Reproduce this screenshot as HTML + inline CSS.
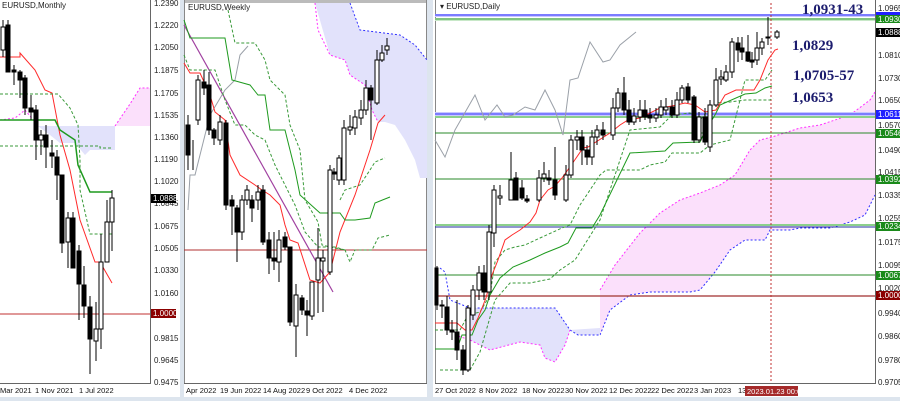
<!DOCTYPE html>
<html><head><meta charset="utf-8"><style>
html,body{margin:0;padding:0;background:#fff;}
svg{display:block;font-family:"Liberation Sans",sans-serif;}
.ax{font-size:8px;fill:#222;}
.dt{font-size:7.5px;fill:#111;}
.ann{font-family:"Liberation Serif",serif;font-weight:bold;font-size:15px;fill:#1c1c6e;}
.c line{stroke:#000;stroke-width:1}
.c .w{fill:#fff;stroke:#000;stroke-width:1}
.c .b{fill:#000;stroke:#000;stroke-width:1}
.r{fill:none;stroke:#ff2a2a;stroke-width:1}
.g{fill:none;stroke:#1e9a1e;stroke-width:1}
.gd{fill:none;stroke:#3a9a3a;stroke-width:1;stroke-dasharray:3,2}
.gr{fill:none;stroke:#9aa0a8;stroke-width:1}
.pm{fill:#fbe0fb;}
.pb{fill:#e2e2fb;}
</style></head><body>
<svg width="900" height="401" viewBox="0 0 900 401" xmlns="http://www.w3.org/2000/svg">
<rect width="900" height="401" fill="#fff"/>
<rect x="150" y="0" width="1" height="384" fill="#666"/>
<rect x="180" y="0" width="4" height="401" fill="#dde5ee"/>
<rect x="184" y="0" width="243" height="3" fill="#bbb"/>
<rect x="184" y="0" width="1" height="384" fill="#888"/>
<rect x="426" y="0" width="1" height="384" fill="#888"/>
<rect x="427" y="0" width="6" height="401" fill="#dde5ee"/>
<rect x="435" y="0" width="1" height="384" fill="#888"/>
<rect x="875" y="0" width="1" height="384" fill="#666"/>
<rect x="0" y="383" width="151" height="1" fill="#666"/>
<rect x="184" y="383" width="243" height="1" fill="#666"/>
<rect x="435" y="383" width="441" height="1" fill="#666"/>
<rect x="0" y="397" width="900" height="4" fill="#dde5ee"/>

<!-- ========== MONTHLY ========== -->
<text x="2" y="8" class="ax">EURUSD,Monthly</text>
<polygon class="pb" points="35,126 115,126 115,150 90,150 85,155 75,143 60,143 50,135 35,124"/>
<polygon class="pm" points="115,126 130,104 140,88 150,88 150,126"/>
<polyline points="115,126 130,104 140,88 150,88" fill="none" stroke="#ff30ff" stroke-dasharray="2,2"/>
<polyline points="0,120 15,118 25,110 35,122" fill="none" stroke="#ff30ff" stroke-dasharray="2,2"/>
<line x1="0" y1="314" x2="150" y2="314" stroke="#c03030"/>
<polyline class="r" points="0,57 20,57 20,53 35,70 45,90 52,93 60,135 70,170 75,195 80,220 95,262 100,262 112,283"/>
<polyline class="g" points="0,120 55,120 60,130 75,140 78,165 90,192 112,192" style="stroke-width:1.5"/>
<polyline class="gd" points="0,94 58,94 70,108 78,125 80,160 80,190 90,234 112,234"/>
<polyline class="gd" points="0,146 100,146 100,148 112,148"/>
<g class="c">
<line x1="3" y1="20" x2="3" y2="57"/><rect class="w" x="1" y="27" width="4" height="23"/>
<line x1="8" y1="20" x2="8" y2="72"/><rect class="b" x="6" y="25" width="4" height="47"/>
<line x1="14" y1="65" x2="14" y2="85"/><rect class="b" x="12" y="70" width="4" height="2"/>
<line x1="20" y1="70" x2="20" y2="98"/><rect class="b" x="18" y="72" width="4" height="8"/>
<line x1="25" y1="75" x2="25" y2="115"/><rect class="b" x="23" y="78" width="4" height="30"/>
<line x1="31" y1="95" x2="31" y2="120"/><rect class="b" x="29" y="108" width="4" height="4"/>
<line x1="36" y1="105" x2="36" y2="160"/><rect class="b" x="34" y="110" width="4" height="30"/>
<line x1="41" y1="130" x2="41" y2="155"/><rect class="w" x="39" y="135" width="4" height="5"/>
<line x1="46" y1="125" x2="46" y2="168"/><rect class="b" x="44" y="135" width="4" height="12"/>
<line x1="52" y1="140" x2="52" y2="168"/><rect class="b" x="50" y="153" width="4" height="3"/>
<line x1="57" y1="150" x2="57" y2="200"/><rect class="b" x="55" y="157" width="4" height="18"/>
<line x1="62" y1="175" x2="62" y2="253"/><rect class="b" x="60" y="175" width="4" height="68"/>
<line x1="68" y1="212" x2="68" y2="268"/><rect class="w" x="66" y="218" width="4" height="24"/>
<line x1="73" y1="212" x2="73" y2="268"/><rect class="b" x="71" y="218" width="4" height="50"/>
<line x1="79" y1="245" x2="79" y2="320"/><rect class="b" x="77" y="251" width="4" height="33"/>
<line x1="84" y1="266" x2="84" y2="318"/><rect class="b" x="82" y="285" width="4" height="21"/>
<line x1="90" y1="296" x2="90" y2="374"/><rect class="b" x="88" y="307" width="4" height="32"/>
<line x1="96" y1="302" x2="96" y2="361"/><rect class="w" x="94" y="329" width="4" height="12"/>
<line x1="101" y1="234" x2="101" y2="349"/><rect class="w" x="99" y="262" width="4" height="67"/>
<line x1="107" y1="200" x2="107" y2="251"/><rect class="w" x="105" y="222" width="4" height="40"/>
<line x1="112" y1="190" x2="112" y2="251"/><rect class="w" x="110" y="198" width="4" height="24"/>
</g>
<g class="ax">
<text x="154" y="6">1.2390</text><text x="154" y="28">1.2220</text><text x="154" y="50">1.2050</text>
<text x="154" y="73">1.1875</text><text x="154" y="96">1.1705</text><text x="154" y="118">1.1535</text>
<text x="154" y="140">1.1360</text><text x="154" y="162">1.1190</text><text x="154" y="184">1.1020</text>
<text x="154" y="206">1.0845</text><text x="154" y="229">1.0675</text><text x="154" y="251">1.0505</text>
<text x="154" y="273">1.0330</text><text x="154" y="296">1.0160</text><text x="154" y="341">0.9815</text>
<text x="154" y="363">0.9645</text><text x="154" y="385">0.9475</text>
</g>
<rect x="151" y="194" width="25" height="9" fill="#000"/><text x="153" y="201" class="ax" style="fill:#fff">1.0888</text>
<rect x="151" y="309" width="25" height="9" fill="#8b0000"/><text x="153" y="316" class="ax" style="fill:#fff">1.0000</text>
<g class="dt"><text x="0" y="393">Mar 2021</text><text x="35" y="393">1 Nov 2021</text><text x="79" y="393">1 Jul 2022</text></g>

<!-- ========== WEEKLY ========== -->
<text x="188" y="10" class="ax">EURUSD,Weekly</text>
<polygon class="pb" points="315,3 350,3 360,30 400,35 415,45 427,60 427,178 420,178 415,160 405,140 395,125 385,122 378,122 372,110 365,85 350,75 345,60 330,55"/>
<polyline points="315,3 318,30 330,55 345,60 350,75 365,85 372,110 378,122" fill="none" stroke="#ff30ff" stroke-dasharray="2,2"/>
<polyline points="350,3 360,30 400,35 415,45 427,60" fill="none" stroke="#3030ff" stroke-dasharray="2,2"/>
<line x1="184" y1="250" x2="427" y2="250" stroke="#b03030"/>
<line x1="184" y1="25" x2="333" y2="292" stroke="#a040a0" stroke-width="1.2"/>
<polyline class="gr" points="188,210 190,175 195,175 210,115 225,90 235,80 240,55 248,46"/>
<polyline class="r" points="184,63 190,73 200,73 210,95 215,112 225,120 230,155 240,175 255,185 262,190 270,195 280,205 285,225 290,240 298,243 310,280 320,283 330,272 340,232 355,195 370,150 378,123 385,115"/>
<polyline class="g" points="184,20 190,38 225,38 232,80 250,85 258,95 265,95 270,130 285,130 295,170 300,195 320,213 340,213 345,220 355,220 370,218 375,203 390,197"/>
<polyline class="gd" points="228,10 235,43 255,43 265,60 270,80 285,95 290,125 300,150 305,200 318,222 322,245 330,247 345,250 350,262 355,250 372,250 378,238 390,235"/>
<polyline class="gd" points="184,55 190,70 215,70 225,100 235,125 245,125 255,135 265,140 275,165 285,185 295,205 305,232 318,247 335,247 345,250"/>
<polyline class="gd" points="340,200 345,190 360,185 370,170 375,162 385,158"/>
<g class="c">
<line x1="188" y1="115" x2="188" y2="170"/><rect class="b" x="186" y="125" width="4" height="30"/>
<line x1="193" y1="140" x2="193" y2="170"/>
<line x1="198" y1="75" x2="198" y2="125"/><rect class="w" x="196" y="80" width="4" height="40"/>
<line x1="204" y1="70" x2="204" y2="95"/><rect class="b" x="202" y="82" width="4" height="6"/>
<line x1="209" y1="72" x2="209" y2="135"/><rect class="b" x="207" y="85" width="4" height="45"/>
<line x1="214" y1="128" x2="214" y2="145"/><rect class="b" x="212" y="130" width="4" height="8"/>
<line x1="220" y1="115" x2="220" y2="145"/><rect class="w" x="218" y="122" width="4" height="18"/>
<line x1="226" y1="120" x2="226" y2="210"/><rect class="b" x="224" y="123" width="4" height="82"/>
<line x1="232" y1="195" x2="232" y2="235"/><rect class="b" x="230" y="200" width="4" height="6"/>
<line x1="237" y1="205" x2="237" y2="262"/><rect class="b" x="235" y="208" width="4" height="24"/>
<line x1="242" y1="195" x2="242" y2="240"/><rect class="w" x="240" y="200" width="4" height="32"/>
<line x1="247" y1="185" x2="247" y2="205"/><rect class="w" x="245" y="190" width="4" height="10"/>
<line x1="252" y1="195" x2="252" y2="222"/><rect class="b" x="250" y="200" width="4" height="8"/>
<line x1="258" y1="185" x2="258" y2="210"/><rect class="w" x="256" y="192" width="4" height="8"/>
<line x1="263" y1="185" x2="263" y2="245"/><rect class="b" x="261" y="190" width="4" height="52"/>
<line x1="269" y1="232" x2="269" y2="274"/><rect class="b" x="267" y="240" width="4" height="18"/>
<line x1="274" y1="232" x2="274" y2="270"/><rect class="b" x="272" y="258" width="4" height="3"/>
<line x1="279" y1="230" x2="279" y2="282"/><rect class="w" x="277" y="240" width="4" height="22"/>
<line x1="285" y1="232" x2="285" y2="250"/><rect class="b" x="283" y="237" width="4" height="10"/>
<line x1="290" y1="247" x2="290" y2="326"/><rect class="b" x="288" y="247" width="4" height="75"/>
<line x1="296" y1="284" x2="296" y2="357"/><rect class="w" x="294" y="295" width="4" height="31"/>
<line x1="302" y1="295" x2="302" y2="315"/><rect class="b" x="300" y="298" width="4" height="12"/>
<line x1="307" y1="300" x2="307" y2="336"/><rect class="b" x="305" y="311" width="4" height="4"/>
<line x1="312" y1="282" x2="312" y2="320"/><rect class="w" x="310" y="282" width="4" height="34"/>
<line x1="318" y1="228" x2="318" y2="313"/><rect class="w" x="316" y="258" width="4" height="22"/>
<line x1="323" y1="250" x2="323" y2="312"/><rect class="w" x="321" y="258" width="4" height="3"/>
<line x1="330" y1="165" x2="330" y2="275"/><rect class="w" x="328" y="170" width="4" height="102"/>
<line x1="334" y1="168" x2="334" y2="180"/><rect class="b" x="332" y="172" width="4" height="2"/>
<line x1="339" y1="155" x2="339" y2="185"/><rect class="w" x="337" y="158" width="4" height="22"/>
<line x1="344" y1="120" x2="344" y2="185"/><rect class="w" x="342" y="128" width="4" height="52"/>
<line x1="350" y1="115" x2="350" y2="135"/><rect class="w" x="348" y="127" width="4" height="3"/>
<line x1="355" y1="110" x2="355" y2="135"/><rect class="w" x="353" y="117" width="4" height="11"/>
<line x1="361" y1="100" x2="361" y2="125"/><rect class="w" x="359" y="110" width="4" height="8"/>
<line x1="366" y1="80" x2="366" y2="115"/><rect class="w" x="364" y="88" width="4" height="22"/>
<line x1="371" y1="85" x2="371" y2="140"/><rect class="b" x="369" y="88" width="4" height="12"/>
<line x1="377" y1="50" x2="377" y2="105"/><rect class="w" x="375" y="60" width="4" height="43"/>
<line x1="382" y1="45" x2="382" y2="62"/><rect class="w" x="380" y="53" width="4" height="7"/>
<line x1="387" y1="38" x2="387" y2="55"/><rect class="w" x="385" y="46" width="4" height="4"/>
</g>
<g class="dt"><text x="186" y="393">Apr 2022</text><text x="220" y="393">19 Jun 2022</text><text x="263" y="393">14 Aug 2022</text><text x="306" y="393">9 Oct 2022</text><text x="349" y="393">4 Dec 2022</text></g>

<!-- ========== DAILY ========== -->
<text x="440" y="9" class="ax">▾ EURUSD,Daily</text>
<polygon class="pm" points="600,290 615,265 640,233 660,213 680,200 700,193 720,185 735,175 750,150 760,140 772,137 800,128 820,125 850,115 870,100 875,92 875,195 865,215 850,222 830,228 800,228 790,230 770,230 765,240 745,240 730,250 715,272 700,290 690,292 650,292 630,295 610,310 600,335"/>
<polyline points="600,290 615,265 640,233 660,213 680,200 700,193 720,185 735,175 750,150 760,140 772,137 800,128 820,125 850,115 870,100 875,92" fill="none" stroke="#ff30ff" stroke-dasharray="2,2"/>
<polyline points="600,335 610,310 630,295 650,292 690,292 700,290 715,272 730,250 745,240 765,240 770,230 790,230 800,228 830,228 850,222 865,215 875,195" fill="none" stroke="#3030ff" stroke-dasharray="2,2"/>
<polygon class="pb" points="470,308 555,308 570,330 578,335 600,335 600,328 570,330 565,345 555,362 545,358 540,345 520,342 490,350 470,340"/>
<polyline points="440,268 445,272 450,300 470,308 555,308 570,330 578,335 600,335" fill="none" stroke="#3030ff" stroke-dasharray="2,2"/>
<polyline points="455,335 470,340 490,350 520,342 540,345 545,358 555,362 565,345 570,330" fill="none" stroke="#ff30ff" stroke-dasharray="2,2"/>
<rect x="435" y="14" width="440" height="3" fill="#c8c8ff"/><line x1="435" y1="15" x2="875" y2="15" stroke="#3030ff"/>
<rect x="435" y="18" width="440" height="3" fill="#c8e8c8"/><line x1="435" y1="19" x2="875" y2="19" stroke="#3aa03a"/>
<rect x="435" y="112" width="440" height="5" fill="#c8c8ff"/><line x1="435" y1="114" x2="875" y2="114" stroke="#3030ff"/>
<line x1="435" y1="117" x2="875" y2="117" stroke="#8cd08c" stroke-width="2"/>
<line x1="435" y1="133" x2="875" y2="133" stroke="#2a8a2a"/>
<line x1="435" y1="179" x2="875" y2="179" stroke="#2a8a2a"/>
<line x1="435" y1="225" x2="875" y2="225" stroke="#8cd08c" stroke-width="2"/><line x1="435" y1="227" x2="875" y2="227" stroke="#2030a0"/>
<line x1="435" y1="275" x2="875" y2="275" stroke="#2a8a2a"/>
<line x1="435" y1="296" x2="875" y2="296" stroke="#b05050" stroke-width="1.5"/>
<line x1="771" y1="3" x2="771" y2="383" stroke="#c03030" stroke-dasharray="2,2"/>
<polyline class="gr" points="435,140 445,157 455,130 475,95 485,120 497,105 505,117 513,115 525,107 535,110 545,90 555,110 563,135 570,80 578,78 590,42 603,62 610,60 620,45 636,32"/>
<polyline class="gd" points="435,330 460,330 468,315 480,312 490,295 495,262 505,250 515,247 525,245 540,238 562,228 570,225 580,205 600,175 606,170 640,170 650,165 665,162 672,153 700,153 710,145 730,140 745,80 765,80 772,70"/>
<polyline class="gd" points="440,370 470,370 480,352 495,300 510,283 530,283 550,279 560,270 575,260 600,220 610,190 630,130 660,127 672,115 690,113 700,120 715,103 730,102 745,100 770,100 773,98"/>
<polyline class="g" points="435,349 457,349 462,335 472,335 478,320 485,310 490,295 500,278 513,267 530,260 545,253 560,247 568,243 576,228 592,228 600,215 630,153 665,151 673,143 700,142 705,131 715,115 720,105 745,94 756,93 765,88 772,86"/>
<polyline class="r" points="435,323 457,323 465,330 472,330 478,318 486,298 492,275 498,260 505,240 512,235 520,230 530,222 536,213 540,200 548,190 555,186 562,178 572,164 583,148 588,147 610,133 620,125 628,120 640,118 660,108 672,106 685,103 695,105 705,112 716,110 725,95 736,90 754,90 760,80 768,60 775,50 778,49"/>
<g class="c">
<line x1="437" y1="266" x2="437" y2="310"/><rect class="b" x="435" y="268" width="3" height="37"/>
<line x1="442" y1="300" x2="442" y2="318"/><rect class="b" x="440" y="305" width="4" height="1"/>
<line x1="447" y1="296" x2="447" y2="335"/><rect class="b" x="445" y="307" width="4" height="23"/>
<line x1="452" y1="320" x2="452" y2="340"/><rect class="b" x="450" y="330" width="4" height="2"/>
<line x1="457" y1="300" x2="457" y2="360"/><rect class="b" x="455" y="332" width="4" height="18"/>
<line x1="463" y1="345" x2="463" y2="375"/><rect class="b" x="461" y="350" width="4" height="20"/>
<line x1="468" y1="305" x2="468" y2="372"/><rect class="w" x="466" y="308" width="4" height="62"/>
<line x1="473" y1="285" x2="473" y2="320"/><rect class="w" x="471" y="290" width="4" height="25"/>
<line x1="479" y1="266" x2="479" y2="300"/><rect class="w" x="477" y="273" width="4" height="17"/>
<line x1="484" y1="265" x2="484" y2="300"/><rect class="b" x="482" y="273" width="4" height="19"/>
<line x1="489" y1="225" x2="489" y2="300"/><rect class="w" x="487" y="232" width="4" height="60"/>
<line x1="494" y1="185" x2="494" y2="247"/><rect class="w" x="492" y="190" width="4" height="43"/>
<line x1="500" y1="185" x2="500" y2="205"/><rect class="w" x="498" y="196" width="4" height="2"/>
<line x1="511" y1="152" x2="511" y2="200"/><rect class="w" x="509" y="180" width="4" height="20"/>
<line x1="516" y1="172" x2="516" y2="200"/><rect class="b" x="514" y="178" width="4" height="22"/>
<line x1="522" y1="180" x2="522" y2="200"/><rect class="b" x="520" y="188" width="4" height="10"/>
<line x1="527" y1="195" x2="527" y2="203"/><rect class="b" x="525" y="199" width="4" height="2"/>
<line x1="539" y1="170" x2="539" y2="202"/><rect class="w" x="537" y="178" width="4" height="22"/>
<line x1="544" y1="162" x2="544" y2="182"/><rect class="w" x="542" y="174" width="4" height="4"/>
<line x1="549" y1="170" x2="549" y2="185"/><rect class="b" x="547" y="178" width="4" height="2"/>
<line x1="555" y1="147" x2="555" y2="200"/><rect class="b" x="553" y="180" width="4" height="15"/>
<line x1="566" y1="165" x2="566" y2="202"/><rect class="w" x="564" y="175" width="4" height="25"/>
<line x1="571" y1="135" x2="571" y2="178"/><rect class="w" x="569" y="140" width="4" height="35"/>
<line x1="577" y1="130" x2="577" y2="150"/><rect class="w" x="575" y="137" width="4" height="3"/>
<line x1="582" y1="130" x2="582" y2="165"/><rect class="b" x="580" y="137" width="4" height="13"/>
<line x1="587" y1="145" x2="587" y2="165"/><rect class="b" x="585" y="150" width="4" height="7"/>
<line x1="592" y1="130" x2="592" y2="165"/><rect class="w" x="590" y="137" width="4" height="20"/>
<line x1="597" y1="125" x2="597" y2="145"/><rect class="w" x="595" y="130" width="4" height="7"/>
<line x1="603" y1="122" x2="603" y2="140"/><rect class="b" x="601" y="130" width="4" height="5"/>
<line x1="613" y1="98" x2="613" y2="140"/><rect class="w" x="611" y="108" width="4" height="27"/>
<line x1="618" y1="88" x2="618" y2="112"/><rect class="w" x="616" y="93" width="4" height="15"/>
<line x1="624" y1="77" x2="624" y2="115"/><rect class="b" x="622" y="93" width="4" height="17"/>
<line x1="629" y1="100" x2="629" y2="125"/><rect class="b" x="627" y="110" width="4" height="12"/>
<line x1="634" y1="108" x2="634" y2="125"/><rect class="w" x="632" y="116" width="4" height="6"/>
<line x1="640" y1="100" x2="640" y2="122"/><rect class="w" x="638" y="110" width="4" height="7"/>
<line x1="645" y1="100" x2="645" y2="120"/><rect class="b" x="643" y="110" width="4" height="7"/>
<line x1="650" y1="108" x2="650" y2="123"/><rect class="b" x="648" y="115" width="4" height="3"/>
<line x1="656" y1="108" x2="656" y2="122"/><rect class="w" x="654" y="115" width="4" height="3"/>
<line x1="661" y1="100" x2="661" y2="118"/><rect class="w" x="659" y="107" width="4" height="8"/>
<line x1="666" y1="98" x2="666" y2="115"/><rect class="w" x="664" y="107" width="4" height="3"/>
<line x1="672" y1="100" x2="672" y2="118"/><rect class="b" x="670" y="107" width="4" height="8"/>
<line x1="677" y1="92" x2="677" y2="118"/><rect class="w" x="675" y="100" width="4" height="15"/>
<line x1="682" y1="85" x2="682" y2="103"/><rect class="w" x="680" y="88" width="4" height="12"/>
<line x1="688" y1="83" x2="688" y2="103"/><rect class="b" x="686" y="87" width="4" height="13"/>
<line x1="694" y1="95" x2="694" y2="143"/><rect class="b" x="692" y="97" width="4" height="43"/>
<line x1="699" y1="112" x2="699" y2="143"/><rect class="w" x="697" y="117" width="4" height="23"/>
<line x1="705" y1="108" x2="705" y2="145"/><rect class="b" x="703" y="117" width="4" height="25"/>
<line x1="710" y1="100" x2="710" y2="152"/><rect class="w" x="708" y="105" width="4" height="42"/>
<line x1="716" y1="68" x2="716" y2="107"/><rect class="w" x="714" y="80" width="4" height="25"/>
<line x1="721" y1="70" x2="721" y2="85"/><rect class="w" x="719" y="77" width="4" height="2"/>
<line x1="726" y1="65" x2="726" y2="82"/><rect class="w" x="724" y="72" width="4" height="8"/>
<line x1="732" y1="38" x2="732" y2="78"/><rect class="w" x="730" y="42" width="4" height="30"/>
<line x1="738" y1="37" x2="738" y2="62"/><rect class="b" x="736" y="43" width="4" height="7"/>
<line x1="742" y1="37" x2="742" y2="60"/><rect class="b" x="740" y="48" width="4" height="4"/>
<line x1="748" y1="35" x2="748" y2="62"/><rect class="b" x="746" y="52" width="4" height="9"/>
<line x1="752" y1="52" x2="752" y2="68"/><rect class="b" x="750" y="60" width="4" height="2"/>
<line x1="757" y1="32" x2="757" y2="65"/><rect class="w" x="755" y="48" width="4" height="12"/>
<line x1="762" y1="38" x2="762" y2="55"/><rect class="w" x="760" y="42" width="4" height="6"/>
<line x1="768" y1="17" x2="768" y2="45"/><rect class="b" x="766" y="37" width="4" height="1"/>
<line x1="777" y1="30" x2="777" y2="39"/><rect class="w" x="775" y="32" width="4" height="5"/>
</g>
<text x="802" y="14" class="ann">1,0931-43</text>
<text x="792" y="50" class="ann">1,0829</text>
<text x="793" y="80" class="ann">1,0705-57</text>
<text x="792" y="102" class="ann">1,0653</text>
<g class="ax">
<text x="878" y="11">1.0965</text><text x="878" y="58">1.0810</text><text x="878" y="81">1.0730</text>
<text x="878" y="103">1.0650</text><text x="878" y="128">1.0570</text><text x="878" y="153">1.0490</text>
<text x="878" y="175">1.0415</text><text x="878" y="198">1.0335</text><text x="878" y="221">1.0255</text>
<text x="878" y="245">1.0175</text><text x="878" y="268">1.0095</text><text x="878" y="291">1.0020</text>
<text x="878" y="316">0.9940</text><text x="878" y="339">0.9860</text><text x="878" y="363">0.9780</text>
<text x="878" y="385">0.9705</text>
</g>
<g style="font-size:8px">
<rect x="876" y="12" width="24" height="6" fill="#2020ff"/>
<rect x="876" y="15" width="24" height="8" fill="#1a8a1a"/><text x="878" y="22" style="fill:#fff">1.0930</text>
<rect x="876" y="28" width="24" height="9" fill="#000"/><text x="878" y="35" style="fill:#fff">1.0888</text>
<rect x="876" y="110" width="24" height="9" fill="#2020ff"/><text x="878" y="117" style="fill:#fff">1.0611</text>
<rect x="876" y="129" width="24" height="9" fill="#1a8a1a"/><text x="878" y="136" style="fill:#fff">1.0546</text>
<rect x="876" y="175" width="24" height="9" fill="#1a8a1a"/><text x="878" y="182" style="fill:#fff">1.0392</text>
<rect x="876" y="222" width="24" height="9" fill="#1a8a1a"/><text x="878" y="229" style="fill:#fff">1.0234</text>
<rect x="876" y="271" width="24" height="9" fill="#1a8a1a"/><text x="878" y="278" style="fill:#fff">1.0067</text>
<rect x="876" y="291" width="24" height="9" fill="#8b0000"/><text x="878" y="298" style="fill:#fff">1.0000</text>
</g>
<g class="dt"><text x="435" y="393">27 Oct 2022</text><text x="479" y="393">8 Nov 2022</text><text x="522" y="393">18 Nov 2022</text><text x="565" y="393">30 Nov 2022</text><text x="609" y="393">12 Dec 2022</text><text x="651" y="393">22 Dec 2022</text><text x="694" y="393">3 Jan 2023</text><text x="738" y="393">13</text></g>
<rect x="745" y="386" width="53" height="10" fill="#a52a2a"/><text x="747" y="394" style="font-size:7.5px;fill:#fff">2023.01.23 00:00</text>
</svg>
</body></html>
